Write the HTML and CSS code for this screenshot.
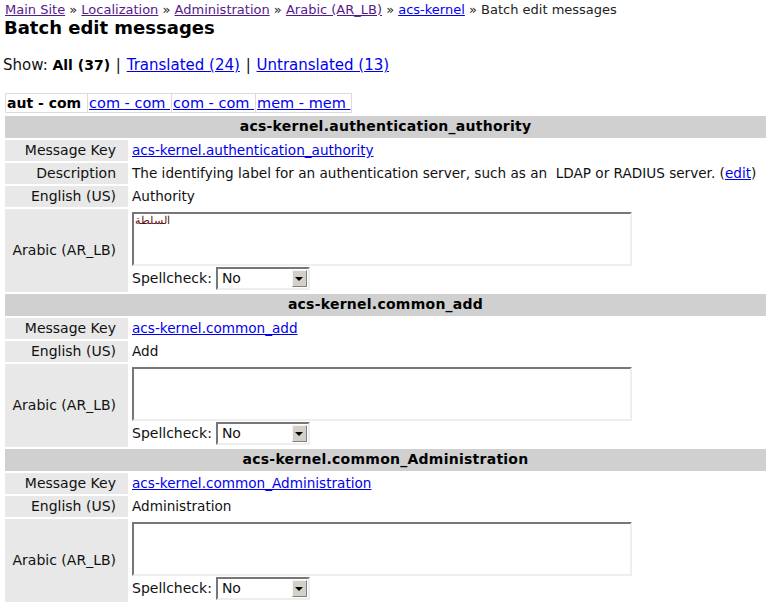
FILE: index.html
```html
<!DOCTYPE html>
<html>
<head>
<meta charset="utf-8">
<title>Batch edit messages</title>
<link rel="stylesheet" href="styles.css">
</head>
<body>
<div class="page">
  <div class="crumbs">
    <a class="visited" href="#">Main Site</a> » <a class="visited" href="#">Localization</a> » <a class="visited" href="#">Administration</a> » <a class="visited" href="#">Arabic (AR_LB)</a> » <a href="#">acs-kernel</a> » Batch edit messages
  </div>
  <h1 class="title">Batch edit messages</h1>
  <div class="show">Show: <b>All (37)</b> <span class="sep">|</span> <a href="#">Translated (24)</a> <span class="sep">|</span> <a href="#">Untranslated (13)</a></div>
  <div class="tabs">
    <span class="tab current">aut - com&nbsp;</span><span class="tab"><a href="#">com - com&nbsp;</a></span><span class="tab"><a href="#">com - com&nbsp;</a></span><span class="tab"><a href="#">mem - mem&nbsp;</a></span>
  </div>
  <table class="msgs">
    <tr><th class="head" colspan="2">acs-kernel.authentication_authority</th></tr>
    <tr><td class="label">Message Key</td><td class="value"><a href="#">acs-kernel.authentication_authority</a></td></tr>
    <tr><td class="label">Description</td><td class="value">The identifying label for an authentication server, such as an&nbsp; LDAP or RADIUS server. (<a href="#">edit</a>)</td></tr>
    <tr><td class="label">English (US)</td><td class="value">Authority</td></tr>
    <tr><td class="label">Arabic (AR_LB)</td><td class="value">
      <textarea class="ta">السلطة</textarea>
      <div class="spell">Spellcheck:<span class="sel"><span class="selval">No</span><span class="selbtn"><span class="arrow"></span></span></span></div>
    </td></tr>

    <tr><th class="head" colspan="2">acs-kernel.common_add</th></tr>
    <tr><td class="label">Message Key</td><td class="value"><a href="#">acs-kernel.common_add</a></td></tr>
    <tr><td class="label">English (US)</td><td class="value">Add</td></tr>
    <tr><td class="label">Arabic (AR_LB)</td><td class="value">
      <textarea class="ta"></textarea>
      <div class="spell">Spellcheck:<span class="sel"><span class="selval">No</span><span class="selbtn"><span class="arrow"></span></span></span></div>
    </td></tr>

    <tr><th class="head" colspan="2">acs-kernel.common_Administration</th></tr>
    <tr><td class="label">Message Key</td><td class="value"><a href="#">acs-kernel.common_Administration</a></td></tr>
    <tr><td class="label">English (US)</td><td class="value">Administration</td></tr>
    <tr><td class="label">Arabic (AR_LB)</td><td class="value">
      <textarea class="ta"></textarea>
      <div class="spell">Spellcheck:<span class="sel"><span class="selval">No</span><span class="selbtn"><span class="arrow"></span></span></span></div>
    </td></tr>
  </table>
</div>
</body>
</html>
```
FILE: styles.css
```css
* { box-sizing: border-box; }
html, body { margin: 0; padding: 0; background: #fff; }
body {
  font-family: "DejaVu Sans", "Noto Sans", sans-serif;
  font-size: 14px;
  color: #000;
}
a { color: #0000ee; }
a.visited { color: #551a8b; }
.page { padding: 0 0 0 3px; }
.crumbs {
  margin-left: 2px;
  padding-top: 2px;
  height: 17px;
  font-size: 13px;
  line-height: 15px;
  color: #222;
}
.title {
  margin: 0 0 0 1px;
  height: 21px;
  font-size: 18px;
  line-height: 21px;
  font-weight: bold;
  color: #000;
}
.show {
  margin: 19px 0 0 0;
  height: 17px;
  font-size: 15px;
  line-height: 17px;
  color: #111;
}
.show b { color: #000; font-size: 14px; }
.sep { padding: 0 1px; }
.tabs {
  display: inline-flex;
  height: 20px;
  margin: 19px 0 1px 2px;
  border: 1px solid #dcdcdc;
  line-height: 18px;
}
.tab {
  padding: 0 1px;
  border-left: 1px solid #dcdcdc;
}
.tab a { font-size: 14.5px; }
.tab:first-child { border-left: 0; }
.tab.current { font-weight: bold; }
.msgs {
  width: 765px;
  border-spacing: 2px;
  margin: 0;
}
.head {
  background: #d0d0d0;
  font-weight: bold;
  text-align: center;
  padding: 1px 2px 3px;
  height: 22px;
  line-height: 18px;
  letter-spacing: 0.25px;
  color: #000;
}
.label {
  width: 123px;
  background: #e8e8e8;
  text-align: right;
  padding: 2px 12px 2px 2px;
  line-height: 17px;
  vertical-align: middle;
  color: #111;
}
.value {
  padding: 2px;
  line-height: 17px;
  font-size: 13.6px;
  color: #111;
}
.ta {
  display: block;
  width: 500px;
  height: 54px;
  margin: 1px 0 0 0;
  padding: 0 1px;
  resize: none;
  border-style: solid;
  border-width: 2px;
  border-color: #777 #eee #eee #777;
  font-family: "DejaVu Serif", serif;
  font-size: 11px;
  line-height: 14px;
  color: #5a1010;
  background: #fff;
}
.spell {
  display: flex;
  align-items: center;
  height: 24px;
  gap: 4px;
  font-size: 14px;
}
.sel {
  display: inline-flex;
  align-items: center;
  width: 94px;
  height: 23px;
  border-style: solid;
  border-width: 2px;
  border-color: #777 #eee #eee #777;
  background: #fff;
  padding-right: 1px;
}
.selval {
  flex: 1;
  padding-left: 4px;
  line-height: 17px;
}
.selbtn {
  display: flex;
  align-items: center;
  justify-content: center;
  width: 15px;
  height: 17px;
  background: #d4d0c8;
  border-style: solid;
  border-width: 1px;
  border-color: #f4f4f4 #808080 #808080 #f4f4f4;
}
.arrow {
  width: 0;
  height: 0;
  border-left: 4px solid transparent;
  border-right: 4px solid transparent;
  border-top: 4px solid #000;
  margin-top: 1px;
}
```
